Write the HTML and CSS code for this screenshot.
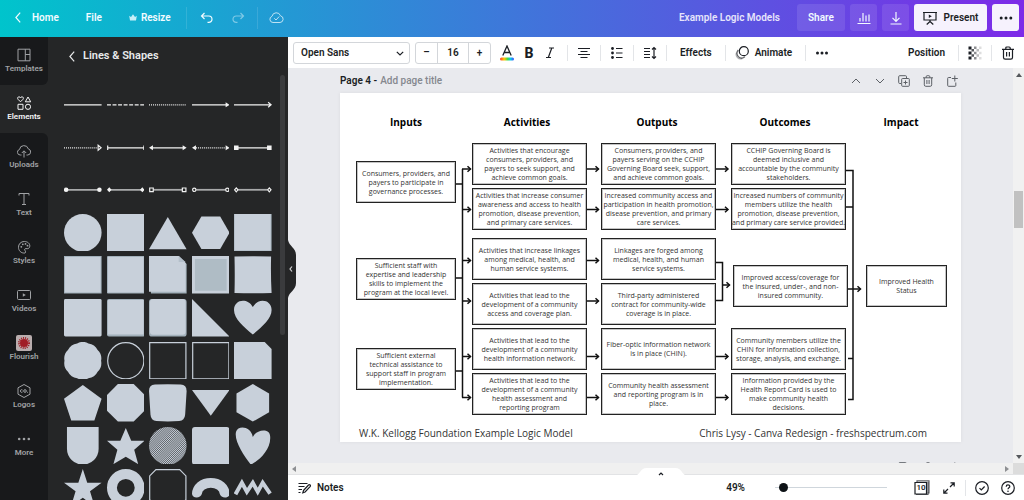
FILE: index.html
```html
<!DOCTYPE html>
<html lang="en">
<head>
<meta charset="utf-8">
<title>Example Logic Models</title>
<link rel="stylesheet" href="styles.css">
</head>
<body>
<header class="topbar">
  <nav class="topbar-nav">
    <a class="home" href="#"><svg class="chev" viewBox="0 0 6 11"><path d="M5.2.7.9 5.5l4.300 4.800"/></svg>Home</a>
    <button class="file">File</button>
    <button class="resize"><svg class="crown" viewBox="0 0 8 7"><path d="M.2 1.800 2 3.100 4 .3l2 2.800 1.800-1.300L7 6.500H1z"/></svg>Resize</button>
    <span class="bar-rule"></span>
    <button class="undo" aria-label="Undo"><svg class="ico-sm" viewBox="0 0 14 12"><path d="M4.500 1 1.500 4l3 3M1.500 4h7.300a3.200 3.200 0 0 1 0 6.400H7.500"/></svg></button>
    <button class="redo" aria-label="Redo" disabled><svg class="ico-sm" viewBox="0 0 14 12"><path d="m9.500 1 3 3-3 3M12.500 4H5.200a3.200 3.200 0 0 0 0 6.400h1.300"/></svg></button>
    <span class="bar-rule"></span>
    <button class="saved" aria-label="All changes saved"><svg class="ico-cloud" viewBox="0 0 15 13"><path d="M4 11.500A3.200 3.200 0 0 1 3 5.300 4.400 4.400 0 0 1 11.500 4.800 3.400 3.400 0 0 1 11 11.500zM5.300 7.300l1.700 1.700 3.200-3.500"/></svg></button>
  </nav>
  <div class="topbar-actions">
    <span class="doc-title">Example Logic Models</span>
    <button class="tbtn share">Share</button>
    <button class="tbtn" aria-label="Insights"><svg class="ico" viewBox="0 0 14 14"><path d="M.5 12.500h13M3 10.500V7M6 10.500V2M9 10.500V4.500M12 10.500V3.500"/></svg></button>
    <button class="tbtn" aria-label="Download"><svg class="ico" viewBox="0 0 14 14"><path d="M1.500 13h11M7 1v9M3.500 6.800 7 10.300l3.500-3.500"/></svg></button>
    <button class="tbtn light present"><svg class="ico" viewBox="0 0 14 14"><path d="M0 1.500h14M1 1.500v7.500h12V1.500M7 9v2M7 10.500l-3.300 3M7 10.500l3.300 3"/><path class="solid" d="m5.800 3.500 3 1.800-3 1.800z"/></svg>Present</button>
    <button class="tbtn light" aria-label="More"><svg class="ico" viewBox="0 0 14 14"><g class="solid"><circle cx="2.200" cy="7" r="1.500"/><circle cx="7" cy="7" r="1.500"/><circle cx="11.800" cy="7" r="1.500"/></g></svg></button>
  </div>
</header>

<div class="app">
  <nav class="rail">
    <a class="rail-item before" href="#"><svg class="ico" viewBox="0 0 14 14"><path d="M1 1.200h12v11.600H1zM8.300 1.200v11.600M8.300 6.500H13"/></svg>Templates</a>
    <a class="rail-item active" href="#"><svg class="ico" viewBox="0 0 14 14"><path d="M3.500 5.800 1 3.300C.2 2.200.8.8 2 .8c.8 0 1.200.5 1.500 1C3.800 1.300 4.200.8 5 .8c1.200 0 1.800 1.400 1 2.500zM11 1 8.300 5.800h5.400zM1 8.300h5v5H1z"/><circle cx="11" cy="10.800" r="2.600"/></svg>Elements</a>
    <a class="rail-item after" href="#"><svg class="ico" viewBox="0 0 14 14"><path d="M4.500 11H3.300A2.800 2.800 0 0 1 2.500 5.500a4.500 4.500 0 0 1 8.800-.6A3.100 3.100 0 0 1 10.700 11H9.500M7 13.500V7M4.800 9 7 6.800 9.200 9"/></svg>Uploads</a>
    <a class="rail-item" href="#"><svg class="ico" viewBox="0 0 14 14"><path d="M2 3.500V1.500h10v2M7 1.500v11M5 12.500h4"/></svg>Text</a>
    <a class="rail-item" href="#"><svg class="ico" viewBox="0 0 14 14"><path d="M8 13C4 13.500 1.500 10.500 1.500 7.300A5.600 5.600 0 0 1 7.300 1.500c3.300 0 5.700 2 5.500 4.700C12.600 8.600 10.500 9 9 8.600c-1.200-.2-1.800.8-1 1.900.6.800 1 2.200 0 2.500z"/><g class="solid"><circle cx="4.300" cy="6.800" r=".9"/><circle cx="5.800" cy="4.300" r=".9"/><circle cx="8.500" cy="3.900" r=".9"/><circle cx="10.500" cy="5.700" r=".9"/></g></svg>Styles</a>
    <a class="rail-item" href="#"><svg class="ico" viewBox="0 0 14 14"><rect x=".5" y="2.500" width="13" height="9" rx="1"/><path class="solid" d="m5.800 5.300 3 1.700-3 1.700z"/></svg>Videos</a>
    <a class="rail-item" href="#"><svg class="ico-app" viewBox="0 0 16 16"><rect class="app-tile" width="16" height="16" rx="2"/><circle class="app-rays" cx="8" cy="8" r="5"/><circle class="app-core" cx="8" cy="8" r="4"/></svg>Flourish</a>
    <a class="rail-item" href="#"><svg class="ico" viewBox="0 0 14 14"><path d="m7 .5 6 3.300v6.400l-6 3.300-6-3.300V3.800z"/><path d="M5.500 6a1.300 1.300 0 1 0 0 2"/><circle cx="8" cy="7" r="1.300"/><circle class="solid" cx="10.500" cy="8.200" r=".5"/></svg>Logos</a>
    <a class="rail-item" href="#"><svg class="ico" viewBox="0 0 14 14"><g class="solid"><circle cx="2.200" cy="7" r="1.300"/><circle cx="7" cy="7" r="1.300"/><circle cx="11.800" cy="7" r="1.300"/></g></svg>More</a>
  </nav>

  <aside class="panel">
    <h1 class="panel-title"><svg class="chev" viewBox="0 0 6 11"><path d="M5.200.7.9 5.500l4.300 4.800"/></svg>Lines &amp; Shapes</h1>
    <div class="shapes">
      <svg class="line" viewBox="0 0 38 38"><path d="M0 19h38"/></svg>
      <svg class="line" viewBox="0 0 38 38"><path stroke-dasharray="4 1.600" d="M0 19h38"/></svg>
      <svg class="line" viewBox="0 0 38 38"><path stroke-dasharray="1 1" d="M0 19h37"/></svg>
      <svg class="line" viewBox="0 0 38 38"><path d="M0 19h36"/><path class="f" d="m34 16.500 4 2.500-4 2.500z"/></svg>
      <svg class="line" viewBox="0 0 38 38"><path d="M0 19h37M34.500 16.500 37.500 19l-3 2.500"/></svg>

      <svg class="line" viewBox="0 0 38 38"><path stroke-dasharray="1 1" d="M0 19h34"/><path d="m34.500 16.500 3 2.500-3 2.500z"/></svg>
      <svg class="line" viewBox="0 0 38 38"><path d="M.5 19h37M.7 16.800v4.400M37.300 16.800v4.400"/></svg>
      <svg class="line" viewBox="0 0 38 38"><path d="M2 19h34"/><path class="f" d="m4 16.500-4 2.500 4 2.500zM34 16.500l4 2.500-4 2.500z"/></svg>
      <svg class="line" viewBox="0 0 38 38"><path stroke-dasharray="1 1" d="M4 19h30"/><path class="f" d="m4 16.500-4 2.500 4 2.500zM34 16.500l4 2.500-4 2.500z"/></svg>
      <svg class="line" viewBox="0 0 38 38"><path d="M2 19h34"/><path class="f" d="M0 16.700h4.600v4.600H0zM33.400 16.700H38v4.600h-4.600z"/></svg>

      <svg class="line thick" viewBox="0 0 38 38"><path d="M2 19h34"/><circle class="f" cx="2.200" cy="19" r="2.300"/><circle class="f" cx="35.800" cy="19" r="2.300"/></svg>
      <svg class="line thick" viewBox="0 0 38 38"><path d="M2 19h34"/><path class="f" d="m0 19 2.300-2.600L4.600 19l-2.300 2.600zM33.400 19l2.300-2.600L38 19l-2.300 2.600z"/></svg>
      <svg class="line thick" viewBox="0 0 38 38"><path d="M4.500 19h29"/><path class="o" d="M.7 17.200h3.600v3.600H.7zM33.700 17.200h3.600v3.600h-3.600z"/></svg>
      <svg class="line thick" viewBox="0 0 38 38"><path d="M4.200 19h29.600"/><circle class="o" cx="2.300" cy="19" r="1.700"/><circle class="o" cx="35.700" cy="19" r="1.700"/></svg>
      <svg class="line thick" viewBox="0 0 38 38"><path d="M4.200 19h29.600"/><path class="o" d="m.6 19 1.700-2L4 19l-1.700 2zM34 19l1.700-2 1.700 2-1.700 2z"/></svg>

      <svg class="shape" viewBox="0 0 38 38"><circle cx="19" cy="19" r="19"/></svg>
      <svg class="shape" viewBox="0 0 38 38"><path d="M0 0h38v38H0z"/></svg>
      <svg class="shape" viewBox="0 0 38 38"><path d="M19 3l19 32.500H0z"/></svg>
      <svg class="shape" viewBox="0 0 38 38"><path d="M9.500 2.500h19L38 19l-9.500 16.500h-19L0 19z"/></svg>
      <svg class="shape" viewBox="0 0 38 38"><path class="shade" d="M0 0h38v38H0z"/><path d="M.5 0H37v37H.5z"/></svg>

      <svg class="shape" viewBox="0 0 38 38"><path class="shade" d="M0 0h38v38H0z"/><path d="M1 1h36v36H1z"/></svg>
      <svg class="shape" viewBox="0 0 38 38"><rect class="shade" width="38" height="38" rx="1"/><path d="M1 1h36v36H1z"/></svg>
      <svg class="shape" viewBox="0 0 38 38"><path class="shade" d="M0 0h30l8 8v30H2z"/><path d="M0 0h30l7 7v29H0z"/><path class="fold" d="M30 0v6h7z"/></svg>
      <svg class="shape" viewBox="0 0 38 38"><path d="M0 0h38v38H0z"/><path class="inset" d="M3 3h32v32H3z"/></svg>
      <svg class="shape" viewBox="0 0 38 38"><path d="M.5.5Q19 0 37.500.5 37 19 38 37.500q-19 .5-37.500 0Q1 19 .5.5z"/></svg>

      <svg class="shape" viewBox="0 0 38 38"><rect width="38" height="38" rx="1.500"/></svg>
      <svg class="shape" viewBox="0 0 38 38"><rect class="shade" width="38" height="38" rx="2"/><path d="M1 1h36v35H1z"/></svg>
      <svg class="shape" viewBox="0 0 38 38"><rect class="shade" width="38" height="38" rx="3"/><rect x="1" width="36" height="36" rx="3"/></svg>
      <svg class="shape" viewBox="0 0 38 38"><path d="M0 0l38 38H0z"/></svg>
      <svg class="shape" viewBox="0 0 38 38"><path d="M19 36C10 28 0 20 0 11 0 1 13-2 19 8c6-10 19-7 19 3 0 9-10 17-19 25z"/></svg>

      <svg class="shape" viewBox="0 0 38 38"><path d="M37.500 19a12 12 0 0 1-3.500 11 12 12 0 0 1-9.300 6.600 12 12 0 0 1-11.400 0A12 12 0 0 1 4 30 12 12 0 0 1 .5 19 12 12 0 0 1 4 8a12 12 0 0 1 9.300-6.600 12 12 0 0 1 11.400 0A12 12 0 0 1 34 8a12 12 0 0 1 3.500 11z"/></svg>
      <svg class="shape hollow" viewBox="0 0 38 38"><circle cx="19" cy="19" r="18.300"/></svg>
      <svg class="shape hollow" viewBox="0 0 38 38"><path d="M.7.7h36.600v36.600H.7z"/></svg>
      <svg class="shape hollow" viewBox="0 0 38 38"><path d="M.7.7h36.600v36.600H.7z"/></svg>
      <svg class="shape" viewBox="0 0 38 38"><path d="M0 0h31l7 7v31H0z"/></svg>

      <svg class="shape" viewBox="0 0 38 38"><path d="M19 1l19 14-7.300 22H7.300L0 15z"/></svg>
      <svg class="shape" viewBox="0 0 38 38"><path d="M11 0h16l11 11v16L27 38H11L0 27V11z"/></svg>
      <svg class="shape" viewBox="0 0 38 38"><path d="M6 .5Q19 0 32 .5q6 .5 6 6.500l-1.500 24q-.5 6-6 6.500-11.500.8-23 0-5.500-.5-6-6.500L0 7Q0 1 6 .5z"/></svg>
      <svg class="shape" viewBox="0 0 38 38"><path d="M0 6h38L19 32z"/></svg>
      <svg class="shape" viewBox="0 0 38 38"><path d="M19 0l16.500 9.500v19L19 38 2.500 28.500v-19z"/></svg>

      <svg class="shape" viewBox="0 0 38 38"><path d="M3 0h32v22a16 16 0 0 1-32 0z"/></svg>
      <svg class="shape" viewBox="0 0 38 38"><path d="M19 1l5.500 13H38L27.500 23l4 14.500L19 30 6.500 37.500l4-14.500L0 14h13.500z"/></svg>
      <svg class="shape" viewBox="0 0 38 38"><defs><pattern id="hatch" width="1.500" height="1.500" patternUnits="userSpaceOnUse" patternTransform="rotate(45)"><path class="hatch-bg" d="M0 0h2v2H0z"/><path d="M0 0h.8v2H0z"/></pattern></defs><circle fill="url(#hatch)" cx="19" cy="19" r="19"/></svg>
      <svg class="shape" viewBox="0 0 38 38"><rect width="38" height="38" rx="3"/></svg>
      <svg class="shape" viewBox="0 0 38 38"><path d="M17 38C10 29 0 14 2 5 4-2 17-1 19 10 23 2 36 1 36.500 9 38 22 26 34 17 38z"/></svg>

      <svg class="shape" viewBox="0 0 38 38"><path d="M19 0l4.500 14H38L26.300 22.500 31 38l-12-9-12 9 4.700-15.500L0 14h14.500z"/></svg>
      <svg class="shape ring" viewBox="0 0 38 38"><circle cx="19" cy="19" r="14"/></svg>
      <svg class="shape hollow" viewBox="0 0 38 38"><path d="M7 .7h24l6.300 6.300v24L31 37.300H7L.7 31V7z"/></svg>
      <svg class="shape" viewBox="0 0 38 38"><path d="M0 25a19 16 0 0 1 38 0c0 5-9 5-10 0a9 6 0 0 0-18 0c-1 5-10 5-10 0z"/></svg>
      <svg class="shape zigzag" viewBox="0 0 38 38"><path d="M1.500 25.500 8 14l5 9 6-9 5 9 5-9 7.500 11"/></svg>
    </div>
    <span class="panel-scroll"></span>
  </aside>

  <main class="editor">
    <div class="toolbar">
      <div class="font-pick">
        <select class="font-select" aria-label="Font"><option>Open Sans</option></select>
        <svg class="caret" viewBox="0 0 8 5"><path d="m.8.8 3.200 3.200L7.200.8"/></svg>
      </div>
      <div class="size-pick">
        <button aria-label="Smaller">–</button>
        <input aria-label="Font size" value="16">
        <button aria-label="Larger">+</button>
      </div>
      <button class="tool t-color" aria-label="Text colour"><svg class="ico" viewBox="0 0 14 16"><defs><linearGradient id="rb"><stop offset="0" stop-color="#ff3b30"/><stop offset=".3" stop-color="#ffc700"/><stop offset=".55" stop-color="#3ddc4a"/><stop offset=".75" stop-color="#10c8e8"/><stop offset="1" stop-color="#3c4cff"/></linearGradient></defs><path class="stroke-lg" d="M2.800 10.500 7 1l4.200 9.500M4.200 7.500h5.600"/><rect class="plain" y="12.500" width="14" height="3" rx="1.500" fill="url(#rb)"/></svg></button>
      <button class="tool t-bold" aria-label="Bold">B</button>
      <button class="tool t-italic" aria-label="Italic"><svg class="ico-it" viewBox="0 0 10 12"><path d="M4 1h5M1 10.500h5M6.800 1 3.300 10.500"/></svg></button>
      <span class="rule"></span>
      <button class="tool" aria-label="Align"><svg class="ico" viewBox="0 0 14 14"><path d="M1 2.500h12M3.500 5.500h7M1 8.500h12M3.500 11.500h7"/></svg></button>
      <span class="rule"></span>
      <button class="tool" aria-label="List"><svg class="ico" viewBox="0 0 14 14"><path d="M6 2.500h6.500M6 7h6.500M6 11.500h6.500"/><g class="solid"><circle cx="2.500" cy="2.500" r="1.400"/><circle cx="2.500" cy="7" r="1.400"/><circle cx="2.500" cy="11.500" r="1.400"/></g></svg></button>
      <span class="rule"></span>
      <button class="tool" aria-label="Spacing"><svg class="ico" viewBox="0 0 14 14"><path d="M1 2.500h6M1 5.500h6M1 8.500h6M1 11.500h6M11 1.500v11M9 3.500l2-2 2 2M9 10.500l2 2 2-2"/></svg></button>
      <span class="rule"></span>
      <button class="tool label">Effects</button>
      <span class="rule"></span>
      <button class="tool animate"><svg class="ico" viewBox="0 0 14 14"><circle cx="8.800" cy="5.200" r="4.500"/><path class="mid" d="M3.300 4A4.600 4.600 0 0 0 10 10.700"/><path class="faint" d="M1.600 6.500a4.400 4.400 0 0 0 5.800 5.900"/></svg>Animate</button>
      <span class="rule"></span>
      <button class="tool" aria-label="More options"><svg class="ico" viewBox="0 0 14 14"><g class="solid"><circle cx="2.500" cy="7" r="1.500"/><circle cx="7" cy="7" r="1.500"/><circle cx="11.500" cy="7" r="1.500"/></g></svg></button>
      <span class="spacer"></span>
      <button class="tool label">Position</button>
      <span class="rule"></span>
      <button class="tool" aria-label="Transparency"><svg class="ico" viewBox="0 0 14 14"><g class="solid"><path d="M.5.500h3v3h-3zM.5 5.500h3v3h-3zM.5 10.500h3v3h-3z"/><path opacity=".75" d="M3.500 3h2.500v2.500H3.500zM3.500 8.300h2.500v2.500H3.500z"/><path opacity=".5" d="M6 .5h2.500v2.500H6zM6 5.700h2.500v2.500H6zM6 11h2.500v2.500H6z"/><path opacity=".3" d="M8.500 3H11v2.500H8.500zM8.500 8.300H11v2.500H8.500z"/><path opacity=".15" d="M11 .5h2.500v2.500H11zM11 5.700h2.500v2.500H11zM11 11h2.500v2.500H11z"/></g></svg></button>
      <span class="rule"></span>
      <button class="tool" aria-label="Delete"><svg class="ico" viewBox="0 0 14 14"><path d="M1 3.300h12M2.500 3.300v8.200q0 1.700 1.700 1.700h5.600q1.700 0 1.700-1.700V3.300M4.800 3.300V2q0-1 1-1h2.400q1 0 1 1v1.300M5.600 6v4.500M8.400 6v4.500"/></svg></button>
    </div>

    <div class="stage">
      <div class="workspace">
        <div class="page-head">
          <label class="page-no" for="page-title">Page 4 -</label>
          <input class="page-title" id="page-title" placeholder="Add page title">
          <button aria-label="Move up"><svg class="ico-p" viewBox="0 0 12 12"><path d="M2 8l4-4 4 4"/></svg></button>
          <button aria-label="Move down"><svg class="ico-p" viewBox="0 0 12 12"><path d="m2 4 4 4 4-4"/></svg></button>
          <button aria-label="Duplicate"><svg class="ico-p" viewBox="0 0 12 12"><path d="M3 8.500H1.700q-1 0-1-1V1.700q0-1 1-1h5.800q1 0 1 1V3M4.500 3.500h6q.8 0 .8.8v6.200q0 .8-.8.8h-6q-.8 0-.8-.8V4.300q0-.8.8-.8zM7.500 5.500v4M5.500 7.500h4"/></svg></button>
          <button aria-label="Delete page"><svg class="ico-p" viewBox="0 0 12 12"><path d="M1 2.800h10M2.300 2.800v7q0 1.500 1.500 1.500h4.400q1.500 0 1.500-1.500v-7M4.200 2.800V1.700q0-1 1-1h1.600q1 0 1 1v1.100M4.900 5v4M7.100 5v4"/></svg></button>
          <button aria-label="Add page"><svg class="ico-p" viewBox="0 0 12 12"><path d="M5 2.500H2.500q-.8 0-.8.800v7.200q0 .8.800.8h6.500q.8 0 .8-.8V7.500M8.800.5v6M5.800 3.500h6"/></svg></button>
        </div>

        <article class="page">
          <svg class="wires" viewBox="0 0 621 349">
            <defs><marker id="tip" viewBox="0 0 6 8" refX="4.500" refY="4" markerWidth="6" markerHeight="8" markerUnits="userSpaceOnUse" orient="auto"><path d="M1.500 1.200 4.500 4l-3 2.800"/></marker></defs>
            <path d="M122.500 76v228.500M115 91h7.500M116 185h6.500M116 278h6.500"/>
            <path marker-end="url(#tip)" d="M122 76h8.500"/><path marker-end="url(#tip)" d="M122 116.500h8.500"/><path marker-end="url(#tip)" d="M122 167.500h8.500"/><path marker-end="url(#tip)" d="M122 208h8.500"/><path marker-end="url(#tip)" d="M122 263.500h8.500"/><path marker-end="url(#tip)" d="M122 304.500h8.500"/>
            <path marker-end="url(#tip)" d="M246 76h12.500"/><path marker-end="url(#tip)" d="M246 116.500h12.500"/><path marker-end="url(#tip)" d="M246 167.500h12.500"/><path marker-end="url(#tip)" d="M246 208h12.500"/><path marker-end="url(#tip)" d="M246 263.500h12.500"/><path marker-end="url(#tip)" d="M246 304.500h12.500"/>
            <path marker-end="url(#tip)" d="M376 76h12"/><path marker-end="url(#tip)" d="M376 116.500h12"/><path marker-end="url(#tip)" d="M376 263.500h12"/><path marker-end="url(#tip)" d="M376 304.500h12"/>
            <path marker-end="url(#tip)" d="M382.500 192h7"/><path marker-end="url(#tip)" d="M507 196h13.500"/>
            <path d="M376 169.500h6.500v38H376M506 77.500h7v229h-5M506 114h7M508 265.500h5"/>
          </svg>

          <h2 class="col-head h-inputs">Inputs</h2>
          <h2 class="col-head h-activities">Activities</h2>
          <h2 class="col-head h-outputs">Outputs</h2>
          <h2 class="col-head h-outcomes">Outcomes</h2>
          <h2 class="col-head h-impact">Impact</h2>

          <p class="node inputs in-1">Consumers, providers, and<br>payers to participate in<br>governance processes.</p>
          <p class="node inputs in-2">Sufficient staff with<br>expertise and leadership<br>skills to implement the<br>program at the local level.</p>
          <p class="node inputs in-3">Sufficient external<br>technical assistance to<br>support staff in program<br>implementation.</p>

          <p class="node activities row-1">Activities that encourage<br>consumers, providers, and<br>payers to seek support, and<br>achieve common goals.</p>
          <p class="node activities row-2">Activities that increase consumer<br>awareness and access to health<br>promotion, disease prevention,<br>and primary care services.</p>
          <p class="node activities row-3">Activities that increase linkages<br>among medical, health, and<br>human service systems.</p>
          <p class="node activities row-4">Activities that lead to the<br>development of a community<br>access and coverage plan.</p>
          <p class="node activities row-5">Activities that lead to the<br>development of a community<br>health information network.</p>
          <p class="node activities row-6">Activities that lead to the<br>development of a community<br>health assessment and<br>reporting program</p>

          <p class="node outputs row-1">Consumers, providers, and<br>payers serving on the CCHIP<br>Governing Board seek, support,<br>and achieve common goals.</p>
          <p class="node outputs row-2">Increased community access and<br>participation in health promotion,<br>disease prevention, and primary<br>care services.</p>
          <p class="node outputs row-3">Linkages are forged among<br>medical, health, and human<br>service systems.</p>
          <p class="node outputs row-4">Third-party administered<br>contract for community-wide<br>coverage is in place.</p>
          <p class="node outputs row-5">Fiber-optic information network<br>is in place (CHIN).</p>
          <p class="node outputs row-6">Community health assessment<br>and reporting program is in<br>place.</p>

          <p class="node outcomes row-1">CCHIP Governing Board is<br>deemed inclusive and<br>accountable by the community<br>stakeholders.</p>
          <p class="node outcomes row-2">Increased numbers of community<br>members utilize the health<br>promotion, disease prevention,<br>and primary care service provided.</p>
          <p class="node outcomes-mid row-mid">Improved access/coverage for<br>the insured, under-, and non-<br>insured community.</p>
          <p class="node outcomes row-5">Community members utilize the<br>CHIN for information collection,<br>storage, analysis, and exchange.</p>
          <p class="node outcomes row-6">Information provided by the<br>Health Report Card is used to<br>make community health<br>decisions.</p>

          <p class="node impact row-mid">Improved Health<br>Status</p>

          <footer class="credits"><span>W.K. Kellogg Foundation Example Logic Model</span><span>Chris Lysy - Canva Redesign - freshspectrum.com</span></footer>
        </article>

        <div class="page-head next" aria-hidden="true">
          <svg class="ico-p" viewBox="0 0 12 12"><path d="M3 8.500H1.700q-1 0-1-1V1.700q0-1 1-1h5.800q1 0 1 1V3"/></svg>
          <svg class="ico-p" viewBox="0 0 12 12"><path d="M1 2.800h10M4.200 2.800V1.700q0-1 1-1h1.600q1 0 1 1v1.100"/></svg>
          <svg class="ico-p" viewBox="0 0 12 12"><path d="M8.800.5v6M5.800 3.500h6"/></svg>
        </div>
      </div>
      <div class="vscroll"><svg class="arrow" viewBox="0 0 6 4"><path d="M3 0l3 4H0z"/></svg><span class="thumb"></span><svg class="arrow" viewBox="0 0 6 4"><path d="M0 0h6L3 4z"/></svg></div>
      <button class="collapse" aria-label="Hide panel"><svg viewBox="0 0 8 58"><path class="flap" d="M0 0c1 6 8 8 8 15v28c0 7-7 9-8 15z"/><path class="mark" d="m4 26.500-2 2.500 2 2.500"/></svg></button>
    </div>

    <div class="hscroll"><svg class="arrow-h" viewBox="0 0 4 6"><path d="M4 0v6L0 3z"/></svg><button class="tab" aria-label="Show pages"><svg viewBox="0 0 56 9"><path class="sheet" d="M0 9c8 0 6-8 14-8h28c8 0 6 8 14 8z"/><path class="mark" d="m26 8 2-2 2 2"/></svg></button><svg class="arrow-h right" viewBox="0 0 4 6"><path d="M0 0v6l4-3z"/></svg><span class="corner"></span></div>

    <footer class="statusbar">
      <button class="notes"><svg class="ico-n" viewBox="0 0 13 12"><path d="M.5 1.500h9M.5 4.500h6M.5 7.500h3.500M.5 10.500h2M5.500 8.500l5-5.500q.8-.7 1.600 0 .7.800 0 1.600l-5 5.400-2.300.8z"/></svg>Notes</button>
      <span class="spacer"></span>
      <label class="zoom-value" for="zoom">49%</label>
      <input class="zoom" id="zoom" type="range" min="0" max="100" value="4">
      <button class="pages" aria-label="Page count"><svg class="ico-pg" viewBox="0 0 16 16"><path class="back" d="M3 2V.8h12V13h-1.500"/><path d="M1 2.500h11.500V14H1z"/><path class="back" d="M14 2v12.500H2"/></svg><span>10</span></button>
      <button class="expand" aria-label="Full screen"><svg class="ico-x" viewBox="0 0 12 12"><path d="m7 5 4-4M7.500.8h3.700v3.700M5 7l-4 4M.8 7.500v3.700h3.700"/></svg></button>
      <span class="rule"></span>
      <button class="check" aria-label="Checked"><svg class="ico" viewBox="0 0 14 14"><circle cx="7" cy="7" r="6.300"/><path d="m4.500 7.200 1.800 1.800 3.300-3.500"/></svg></button>
      <button class="help" aria-label="Help"><svg class="ico" viewBox="0 0 14 14"><circle cx="7" cy="7" r="6.300"/><path d="M5.200 5.700c0-2.400 3.600-2.300 3.600-.2 0 1.300-1.800 1.300-1.800 2.700"/><circle class="solid" cx="7" cy="10.200" r=".8"/></svg></button>
    </footer>
  </main>
</div>
</body>
</html>
```
FILE: styles.css
```css
* { box-sizing: border-box; }

body {
  margin: 0;
  height: 100vh;
  display: flex;
  flex-direction: column;
  overflow: hidden;
  font: 600 10px/16px Roboto, "Noto Sans", sans-serif;
  color: #1b1e24;
}

button, input, select {
  font: inherit;
  color: inherit;
  border: 0;
  background: none;
  padding: 0;
  margin: 0;
}

button { display: flex; align-items: center; justify-content: center; }
a { color: inherit; text-decoration: none; }
svg { display: block; flex: none; fill: none; stroke: currentColor; stroke-width: 1.2; }

.solid { fill: currentColor; stroke: none; }
.plain { stroke: none; }
.ico { width: 14px; height: 14px; }
.spacer { flex: 1; }

/* Top bar */
.topbar {
  height: 37px;
  flex: none;
  display: flex;
  justify-content: space-between;
  align-items: center;
  padding: 0 5px 2px 15px;
  background: linear-gradient(90deg, #00c4cc, #7d2ae8);
  color: #f2fbff;
}
.topbar-nav, .topbar-actions { display: flex; align-items: center; }
.home { display: flex; align-items: center; gap: 11px; }
.chev { width: 6px; height: 11px; }
.file { margin-left: 27px; }
.resize { margin-left: 27px; gap: 4px; }
.crown { width: 8px; height: 7px; fill: #c5eff8; stroke: none; }
.bar-rule { width: 1px; height: 22px; background: #ffffff1f; }
.resize + .bar-rule { margin-left: 15px; }
.undo { margin-left: 13px; }
.redo { margin: 0 12px 0 17px; opacity: .45; }
.ico-sm { width: 14px; height: 12px; }
.saved { margin-left: 11px; opacity: .75; }
.ico-cloud { width: 15px; height: 13px; stroke-width: 1; }
.topbar-actions { gap: 5px; }
.doc-title { margin-right: 12px; color: #e6e4fb; }
.tbtn { height: 27px; width: 27px; border-radius: 3px; background: #ffffff1a; }
.tbtn.share { width: 48px; }
.tbtn.light { background: #f6f2fd; color: #1b1e24; }
.tbtn.present { width: 73px; gap: 7px; }

/* Layout below the top bar */
.app { flex: 1; min-height: 0; display: flex; }

/* Icon rail */
.rail { width: 48px; flex: none; background: #252627; overflow: hidden; }
.rail-item {
  height: 48px;
  display: flex;
  flex-direction: column;
  align-items: center;
  justify-content: flex-start;
  gap: 1px;
  padding-top: 11px;
  background: #18191b;
  color: #a0a2a5;
  font-size: 8px;
  line-height: 12px;
}
.rail .ico { stroke-width: 1; }
.rail-item.before { border-bottom-right-radius: 6px; }
.rail-item.after { border-top-right-radius: 6px; }
.rail-item.active { background: #252627; color: #f4f4f5; }
.rail-item:last-child { height: 100%; }
.ico-app { width: 16px; height: 16px; margin: -1px 0; stroke: none; }
.app-tile { fill: #b9adae; }
.app-core { fill: #a01d26; }
.app-rays { stroke: #a01d26; stroke-width: 2; stroke-dasharray: 1 1; }

/* Shape panel */
.panel {
  position: relative;
  width: 240px;
  flex: none;
  overflow: hidden;
  padding: 11px 16px 0;
  background: #252627;
  color: #e9eaeb;
}
.panel-title {
  display: flex;
  align-items: center;
  gap: 8px;
  margin: 0 0 22px 5px;
  font-size: 11px;
  font-weight: 600;
  line-height: 16px;
}
.shapes { display: grid; grid-template-columns: repeat(5, 1fr); gap: 5px; }
.shapes svg { width: 100%; aspect-ratio: 1; }
.line { stroke: #f2f2f2; stroke-width: 1.2; }
.line .f { fill: #f2f2f2; stroke: none; }
.line .o { stroke: #f2f2f2; stroke-width: 1.2; }
.line.thick { stroke: #a9aaab; stroke-width: 1.8; }
.shape { fill: #c8d0da; stroke: none; }
.shape .shade { fill: #a3b1bb; }
.shape .fold { fill: #b4bfca; }
.shape .inset { fill: #afbcc5; }
.shape .hatch-bg { fill: #55595e; }
.shape.hollow { fill: none; stroke: #c8d0da; stroke-width: 1.2; }
.shape.ring { fill: none; stroke: #c8d0da; stroke-width: 10; }
.shape.zigzag { fill: none; stroke: #c8d0da; stroke-width: 4; }
.panel-scroll {
  position: absolute;
  top: 38px;
  right: 3px;
  width: 5px;
  height: 260px;
  border-radius: 3px;
  background: #3a3b3d;
}

/* Editor */
.editor { flex: 1; min-width: 0; display: flex; flex-direction: column; }

.toolbar {
  height: 31px;
  flex: none;
  display: flex;
  align-items: center;
  gap: 9px;
  padding: 0 9px 0 5px;
  background: #fff;
}
.rule { width: 1px; height: 16px; flex: none; background: #e3e5e8; }
.font-pick { position: relative; width: 117px; height: 22px; }
.font-select {
  width: 100%;
  height: 100%;
  padding: 0 7px;
  border: 1px solid #d3d6da;
  border-radius: 3px;
  appearance: none;
}
.caret { position: absolute; right: 6px; top: 9px; width: 8px; height: 5px; }
.size-pick {
  width: 76px;
  height: 22px;
  display: flex;
  margin-left: -4px;
  border: 1px solid #d3d6da;
  border-radius: 3px;
}
.size-pick button { width: 21px; }
.size-pick input {
  flex: 1;
  min-width: 0;
  text-align: center;
  border: 1px solid #d3d6da;
  border-width: 0 1px;
}
.t-color .ico { width: 14px; height: 16px; }
.stroke-lg { stroke-width: 1.3; }
.t-bold { width: 12px; font-size: 14px; font-weight: 800; }
.t-italic { margin: 0 3px 0 1px; }
.ico-it { width: 10px; height: 12px; }
.tool.label { padding: 0 4px; }
.animate { gap: 6px; padding-right: 4px; }
.mid { opacity: .7; }
.faint { opacity: .35; }

/* Work area */
.stage { position: relative; flex: 1; min-height: 0; display: flex; background: #e9eaee; }
.workspace {
  flex: 1;
  min-width: 0;
  overflow: hidden;
  display: flex;
  flex-direction: column;
  align-items: center;
}
.page-head {
  width: 621px;
  height: 25px;
  flex: none;
  display: flex;
  align-items: center;
  gap: 12px;
  padding-right: 3px;
}
.page-head button { color: #5c6066; }
.page-head label { margin-right: -9px; }
.page-title { flex: 1; min-width: 0; font-weight: 500; }
.page-title::placeholder { color: #85888e; opacity: 1; }
.ico-p { width: 12px; height: 12px; stroke-width: 1; }
.page-head.next { justify-content: flex-end; margin-top: 13px; color: #5c6066; }

.page {
  position: relative;
  width: 621px;
  height: 349px;
  flex: none;
  background: #fff;
  box-shadow: 0 0 4px #00000010;
  font-family: "Open Sans", "Noto Sans", sans-serif;
  font-weight: 400;
}
.wires { position: absolute; inset: 0; width: 100%; height: 100%; stroke: #111; stroke-width: 1.5; }
.col-head {
  position: absolute;
  top: 21px;
  margin: 0;
  width: 100px;
  font-size: 10px;
  line-height: 16px;
  font-weight: 700;
  text-align: center;
  color: #000;
}
.h-inputs { left: 16px; }
.h-activities { left: 137px; }
.h-outputs { left: 267px; }
.h-outcomes { left: 395px; }
.h-impact { left: 511px; }
.node {
  position: absolute;
  height: 42px;
  margin: 0;
  display: grid;
  place-content: center;
  border: 1px solid #222;
  outline: 1px solid #2224;
  outline-offset: -2px;
  font-size: 7px;
  line-height: 9px;
  text-align: center;
  white-space: nowrap;
  color: #333;
}
.inputs { left: 16px; width: 100px; }
.activities { left: 132px; width: 115px; }
.outputs { left: 261px; width: 115px; }
.outcomes { left: 391px; width: 115px; }
.outcomes-mid { left: 393px; width: 115px; }
.impact { left: 526px; width: 81px; }
.in-1 { top: 68px; }
.in-2 { top: 165px; }
.in-3 { top: 255px; }
.row-1 { top: 50px; }
.row-2 { top: 95px; }
.row-3 { top: 145px; }
.row-4 { top: 190px; }
.row-5 { top: 235px; }
.row-6 { top: 280px; }
.row-mid { top: 172px; }
.credits {
  position: absolute;
  inset: auto 34px 1px 19px;
  display: flex;
  justify-content: space-between;
  font-size: 10px;
  line-height: 16px;
  color: #333;
}

.vscroll {
  width: 11px;
  flex: none;
  display: flex;
  flex-direction: column;
  align-items: center;
  padding: 5px 0 4px;
  background: #f1f1f1;
}
.arrow { width: 6px; height: 4px; fill: #55585c; stroke: none; }
.thumb { width: 9px; height: 37px; margin: 114px 0 auto; background: #c1c1c1; }
.collapse { position: absolute; left: 0; top: 172px; }
.collapse svg { width: 8px; height: 58px; }
.flap { fill: #252627; stroke: none; }
.collapse .mark { stroke: #d8d9da; }

.hscroll {
  height: 12px;
  flex: none;
  display: flex;
  align-items: center;
  justify-content: space-between;
  padding-left: 4px;
  background: #f0f0f0;
  border-bottom: 1px solid #e2e3e5;
}
.arrow-h { width: 4px; height: 6px; fill: #8d8f92; stroke: none; }
.arrow-h.right { margin-right: 4px; }
.tab { position: relative; top: 1px; margin: 3px auto 0; padding-left: 20px; }
.tab svg { width: 56px; height: 9px; }
.sheet { fill: #fff; stroke: none; }
.corner { width: 11px; height: 11px; background: #dcdcdc; }

.statusbar {
  height: 25px;
  flex: none;
  display: flex;
  align-items: center;
  padding: 0 9px 0 10px;
  background: #fff;
}
.notes { gap: 6px; }
.ico-n { width: 13px; height: 12px; }
.zoom { width: 112px; height: 14px; margin: 0 27px 0 30px; appearance: none; }
.zoom::-webkit-slider-runnable-track { height: 1px; background: #cfd6dc; }
.zoom::-webkit-slider-thumb {
  appearance: none;
  width: 9px;
  height: 9px;
  margin-top: -4px;
  border-radius: 50%;
  background: #0d1216;
}
.pages { display: grid; place-items: center; }
.pages > * { grid-area: 1 / 1; }
.pages span { font-size: 8px; line-height: 10px; padding-right: 2px; }
.ico-pg { width: 16px; height: 16px; }
.back { opacity: .7; }
.expand { margin: 0 10px 0 13px; }
.ico-x { width: 12px; height: 12px; }
.check { margin-left: 9px; }
.help { margin-left: 12px; }
```
